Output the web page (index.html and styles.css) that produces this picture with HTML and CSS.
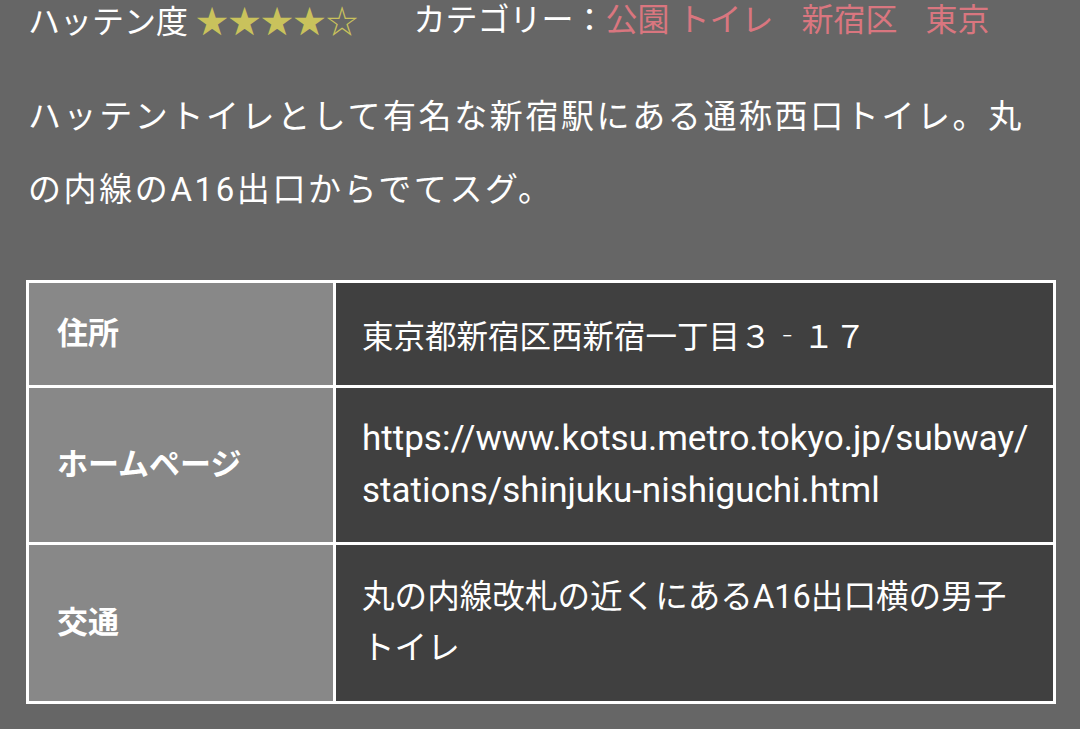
FILE: index.html
```html
<!DOCTYPE html>
<html lang="ja">
<head>
<meta charset="utf-8">
<link rel="stylesheet" href="styles.css">
</head>
<body>
<div class="page">
  <div class="meta">
    <span class="rating">ハッテン度 <span class="stars">★★★★☆</span></span>
    <span class="category">カテゴリー：<span class="cats"><a class="cat">公園 トイレ</a><a class="cat">新宿区</a><a class="cat">東京</a></span></span>
  </div>
  <p class="desc">ハッテントイレとして有名な新宿駅にある通称西口トイレ。丸の内線のA16出口からでてスグ。</p>
  <table class="info">
    <tr class="r1">
      <th>住所</th>
      <td>東京都新宿区西新宿一丁目３‐１７</td>
    </tr>
    <tr class="r2">
      <th>ホームページ</th>
      <td>https://www.kotsu.metro.tokyo.jp/subway/<br>stations/shinjuku-nishiguchi.html</td>
    </tr>
    <tr class="r3">
      <th>交通</th>
      <td>丸の内線改札の近くにあるA16出口横の男子<br>トイレ</td>
    </tr>
  </table>
</div>
</body>
</html>
```

FILE: styles.css
```css
html, body {
  margin: 0;
  padding: 0;
  background: #666666;
}
body {
  font-family: Roboto, "Noto Sans CJK JP", sans-serif;
  color: #ffffff;
  overflow: hidden;
}
.page {
  padding: 0 24px 0 26px;
}
.meta {
  display: flex;
  align-items: center;
  height: 40px;
  font-size: 32px;
  line-height: 40px;
  padding-left: 2px;
  white-space: nowrap;
}
.stars {
  font-family: "Noto Sans CJK JP", sans-serif;
  font-size: 32px;
  line-height: 40px;
  color: #c9c25c;
  letter-spacing: 0.5px;
}
.category {
  margin-left: 55px;
}
.cats {
  display: inline-flex;
  gap: 28px;
}
.cat {
  color: #d9767f;
}
.desc {
  margin: 40px 0 0 2px;
  font-size: 33px;
  line-height: 73px;
  letter-spacing: 2.6px;
  width: 1020px;
}
.info {
  margin-top: 54px;
  width: 1030px;
  table-layout: fixed;
  border-collapse: collapse;
  border: 3px solid #ffffff;
  font-size: 31px;
  line-height: 52px;
}
.info th,
.info td {
  border: 3px solid #ffffff;
  padding: 25px 26px;
  text-align: left;
  vertical-align: middle;
}
.info th {
  width: 250px;
  background: #888888;
  font-weight: bold;
  padding-left: 28px;
}
.info td {
  background: #404040;
  font-weight: normal;
  white-space: nowrap;
}
.r1 td {
  font-family: "Noto Sans CJK JP", sans-serif;
  font-size: 31.5px;
}
.r2 td {
  font-size: 35px;
}
.r3 th,
.r3 td {
  padding-top: 27px;
  padding-bottom: 27px;
}
.r3 td {
  font-size: 32.6px;
  line-height: 51px;
}
```
